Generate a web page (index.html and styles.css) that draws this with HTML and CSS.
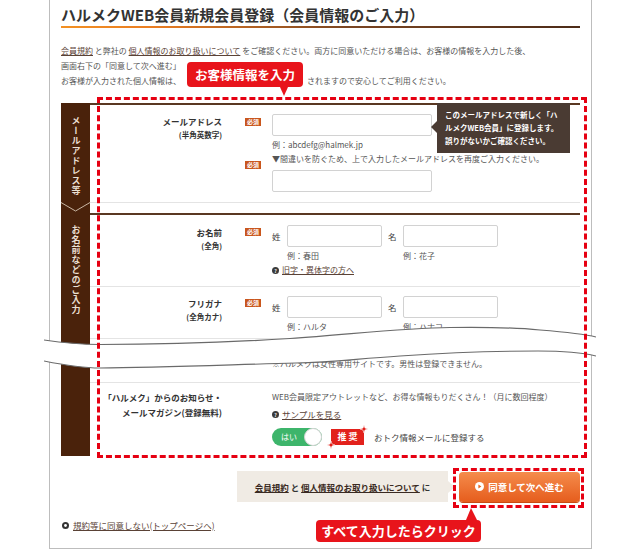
FILE: index.html
```html
<!DOCTYPE html>
<html lang="ja">
<head>
<meta charset="utf-8">
<title>ハルメクWEB会員新規会員登録</title>
<link rel="stylesheet" href="styles.css">
</head>
<body>
<div class="frame">
  <h1 class="title">ハルメクWEB会員新規会員登録（会員情報のご入力）</h1>
  <p class="intro">
    <a href="#">会員規約</a> と弊社の <a href="#">個人情報のお取り扱いについて</a> をご確認ください。両方に同意いただける場合は、お客様の情報を入力した後、<br>
    画面右下の「同意して次へ進む」<br>
    お客様が入力された個人情報は、<span class="gap"></span>されますので安心してご利用ください。
  </p>

  <div class="form">
    <section class="group group--email">
      <div class="side">
        <span class="side-text">メールアドレス等</span>
        <svg class="chevron" width="29" height="10" viewBox="0 0 29 10"><polyline points="0,0.5 14.5,9 29,0.5" fill="none" stroke="#c9b6a4" stroke-width="1"/></svg>
      </div>
      <div class="group-body">
        <div class="row row--email">
          <div class="label"><b>メールアドレス</b><small>(半角英数字)</small></div>
          <div class="fields">
            <div class="sub">
              <span class="req req--first">必須</span>
              <div class="field">
                <input class="input" type="text">
                <p class="hint hint--after">例：abcdefg@halmek.jp</p>
              </div>
            </div>
            <div class="sub">
              <span class="req req--note">必須</span>
              <div class="field">
                <p class="hint">▼間違いを防ぐため、上で入力したメールアドレスを再度ご入力ください。</p>
                <input class="input input--below" type="text">
              </div>
            </div>
          </div>
        </div>
      </div>
    </section>

    <section class="group">
      <div class="side side--name">
        <span class="side-text">お名前などのご入力</span>
      </div>
      <div class="group-body">
        <div class="row row--name">
          <div class="label"><b>お名前</b><small>(全角)</small></div>
          <div class="fields">
            <div class="sub">
              <span class="req">必須</span>
              <div class="field">
                <div class="name-pair">
                  <div class="name-part"><span class="name-label">姓</span><input class="input input--name" type="text"><span class="hint hint--after">例：春田</span></div>
                  <div class="name-part"><span class="name-label">名</span><input class="input input--name" type="text"><span class="hint hint--after">例：花子</span></div>
                </div>
                <p class="help"><span class="q">?</span><a href="#">旧字・異体字の方へ</a></p>
              </div>
            </div>
          </div>
        </div>

        <div class="row row--kana">
          <div class="label"><b>フリガナ</b><small>(全角カナ)</small></div>
          <div class="fields">
            <div class="sub">
              <span class="req">必須</span>
              <div class="field">
                <div class="name-pair">
                  <div class="name-part"><span class="name-label">姓</span><input class="input input--name" type="text"><span class="hint hint--after">例：ハルタ</span></div>
                  <div class="name-part"><span class="name-label">名</span><input class="input input--name" type="text"><span class="hint hint--after">例：ハナコ</span></div>
                </div>
              </div>
            </div>
          </div>
        </div>

        <div class="row row--notice">
          <div class="label"></div>
          <div class="fields plain">
            <p class="hint">※ハルメクは女性専用サイトです。男性は登録できません。</p>
          </div>
        </div>

        <div class="row row--news">
          <div class="label label--news"><b>「ハルメク」からのお知らせ・</b><b>メールマガジン(登録無料)</b></div>
          <div class="fields plain">
            <p class="news-text">WEB会員限定アウトレットなど、お得な情報もりだくさん！（月に数回程度）</p>
            <p class="help help--sample"><span class="q">?</span><a href="#">サンプルを見る</a></p>
            <div class="toggle">
              <span class="switch"><span class="switch-text">はい</span><span class="knob"></span></span>
              <span class="rec">推奨
                <svg class="spark spark--tr" width="8" height="8" viewBox="0 0 8 8"><path d="M4 0 L5 3 L8 4 L5 5 L4 8 L3 5 L0 4 L3 3 Z" fill="#e3211b" stroke="#fff" stroke-width="0.6"/></svg>
                <svg class="spark spark--bl" width="8" height="8" viewBox="0 0 8 8"><path d="M4 0 L5 3 L8 4 L5 5 L4 8 L3 5 L0 4 L3 3 Z" fill="#e3211b" stroke="#fff" stroke-width="0.6"/></svg>
              </span>
              <span class="toggle-text">おトク情報メールに登録する</span>
            </div>
          </div>
        </div>
      </div>
    </section>
  </div>

  <div class="actions">
    <div class="agree"><a href="#">会員規約</a>&nbsp;と&nbsp;<a href="#">個人情報のお取り扱いについて</a>&nbsp;に</div>
    <a class="btn" href="#"><svg class="btn-icon" width="9" height="9" viewBox="0 0 9 9"><circle cx="4.5" cy="4.5" r="4.5" fill="#fff"/><path d="M3.4 2.5 L6.4 4.5 L3.4 6.5 Z" fill="#e8661f"/></svg>同意して次へ進む</a>
  </div>

  <p class="back"><svg class="back-icon" width="7" height="7" viewBox="0 0 7 7"><circle cx="3.5" cy="3.5" r="3.5" fill="#333"/><circle cx="3.5" cy="3.5" r="1.4" fill="#fff"/></svg><a href="#">規約等に同意しない(トップページへ)</a></p>

  <!-- overlays -->
  <div class="tooltip">このメールアドレスで新しく「ハ<br>ルメクWEB会員」に登録します。<br>誤りがないかご確認ください。</div>

  <svg class="wave" width="552" height="50" viewBox="0 0 552 50">
    <path d="M0,18 C20,21 38,22.5 56,22.5 C120,22.5 190,20 246,16.5 C310,12 360,6 406,5.5 C440,5 470,5.5 496,8 C520,10 540,12 552,15 L552,34 C540,31 520,29 494,29 C450,29 400,31 356,34 C310,37 290,40 252,41 C180,43 110,46 56,46 C38,46 20,43 0,39 Z" fill="#fff"/>
    <path d="M0,18 C20,21 38,22.5 56,22.5 C120,22.5 190,20 246,16.5 C310,12 360,6 406,5.5 C440,5 470,5.5 496,8 C520,10 540,12 552,15" fill="none" stroke="#6a6a6a" stroke-width="1.2"/>
    <path d="M552,34 C540,31 520,29 494,29 C450,29 400,31 356,34 C310,37 290,40 252,41 C180,43 110,46 56,46 C38,46 20,43 0,39" fill="none" stroke="#6a6a6a" stroke-width="1.2"/>
  </svg>

  <div class="mark mark--form"></div>
  <div class="mark mark--btn"></div>
  <div class="callout callout--top">お客様情報を入力</div>
  <div class="callout callout--bottom">すべて入力したらクリック</div>
</div>
</body>
</html>
```

FILE: styles.css
```css
* { box-sizing: border-box; margin: 0; padding: 0; }

body {
  margin: 0;
  background: #fff;
  font-family: "Noto Sans CJK JP", "Noto Sans", sans-serif;
  color: #444;
}

a { color: #5a4236; text-decoration: underline; }

.frame {
  position: relative;
  margin-left: 49px;
  width: 543px;
  border: 1px solid #bdbdbd;
  border-top: 0;
  padding: 0 11px 16px;
}

.title {
  font-size: 15px;
  font-weight: bold;
  color: #333;
  line-height: 18px;
  padding: 6px 0 2px;
  border-bottom: 2px solid #6b3d1e;
  border-image: linear-gradient(90deg, #f39123 0%, #ea7d22 18%, #7a4522 55%, #4c2b18 100%) 1;
}

.intro {
  margin-top: 15px;
  font-size: 8px;
  line-height: 15px;
  color: #555;
  white-space: nowrap;
}
.gap { display: inline-block; width: 126px; }

/* form */
.form { margin-top: 15px; }

.group { display: flex; }

.side {
  width: 29px;
  flex-shrink: 0;
  background: #4a220b;
  display: flex;
  flex-direction: column;
  align-items: center;
  padding-top: 13px;
}

.side--name { padding-top: 12px; }

.side-text {
  writing-mode: vertical-rl;
  text-orientation: upright;
  color: #eadfd2;
  font-size: 9px;
  font-weight: bold;
  letter-spacing: 1px;
  line-height: 12px;
}

.chevron { margin-top: auto; margin-bottom: 1px; display: block; }

.group-body {
  flex: 1;
  border-top: 2px solid #5a3822;
}

.group--email .group-body { padding-bottom: 10px; }

.row {
  display: grid;
  grid-template-columns: 132px 1fr;
  column-gap: 23px;
  border-bottom: 1px solid #e4e4e4;
}

.row--email { padding: 9px 0 10px; }
.row--name { padding: 10px 0 9px; }
.row--kana { padding: 9px 0 4px; }
.row--notice { padding: 18px 0 11px; }
.row--news { padding: 7px 0 10px; border-bottom: 0; }

.label { text-align: right; color: #333; }
.label b { display: block; font-size: 8.5px; line-height: 14px; font-weight: bold; }
.label small { display: block; font-size: 7.5px; line-height: 13px; font-weight: bold; }
.label--news b { line-height: 15px; }

.sub { display: flex; column-gap: 11px; }

.req {
  flex-shrink: 0;
  width: 16px;
  height: 8px;
  margin-top: 3px;
  background: #c9561d;
  color: #fff;
  font-size: 6px;
  line-height: 8px;
  text-align: center;
  font-weight: bold;
}
.req--first { margin-top: 4px; }
.req--note { margin-top: 9px; }

.input {
  display: block;
  width: 160px;
  height: 22px;
  border: 1px solid #d2d2d2;
  border-radius: 2px;
  background: #fff;
}
.input--below { margin-top: 4px; }
.input--name { width: 95px; }

.hint {
  display: block;
  font-size: 8px;
  line-height: 14px;
  color: #555;
  white-space: nowrap;
}
.hint--after { margin-top: 2px; }

.name-pair { display: flex; column-gap: 6px; }
.name-part { display: grid; grid-template-columns: 15px 95px; }
.name-label { font-size: 8.5px; line-height: 22px; color: #444; }
.name-part .hint { grid-column: 2; }

.help {
  display: flex;
  align-items: center;
  column-gap: 3px;
  font-size: 8px;
  line-height: 14px;
  color: #555;
}
.help a { color: #5a4236; }
.help--sample { margin-top: 3px; font-size: 8.5px; }

.q {
  width: 7px;
  height: 7px;
  border-radius: 50%;
  background: #3a3a3a;
  color: #fff;
  font-size: 5px;
  line-height: 7px;
  text-align: center;
  font-weight: bold;
  flex-shrink: 0;
}

.plain { padding-left: 27px; }

.news-text { font-size: 8px; line-height: 14px; color: #555; white-space: nowrap; }

.toggle { display: flex; align-items: center; margin-top: 7px; }

.switch {
  width: 50px;
  height: 18px;
  border-radius: 9px;
  background: #3db56b;
  display: flex;
  align-items: center;
  justify-content: space-between;
  padding-left: 9px;
}
.switch-text { color: #fff; font-size: 8px; line-height: 18px; }
.knob {
  width: 18px;
  height: 18px;
  border-radius: 50%;
  background: #fff;
  border: 1px solid #d4d4d4;
}

.rec {
  position: relative;
  margin-left: 9px;
  width: 33px;
  height: 16px;
  background: #e2211c;
  color: #fff;
  font-size: 9px;
  font-weight: bold;
  line-height: 16px;
  letter-spacing: 2px;
  text-indent: 2px;
  text-align: center;
}
.spark { position: absolute; }
.spark--tr { right: -4px; top: -4px; }
.spark--bl { left: -4px; bottom: -4px; }

.toggle-text { margin-left: 10px; font-size: 8.5px; color: #444; }

/* actions */
.actions {
  display: flex;
  justify-content: flex-end;
  align-items: center;
  margin-top: 15px;
}

.agree {
  position: relative;
  width: 211px;
  height: 31px;
  margin-right: 11px;
  background: #f0ebe4;
  display: flex;
  align-items: center;
  justify-content: center;
  font-size: 8.5px;
  font-weight: bold;
  color: #333;
}
.agree a { color: #3a2a22; }
.agree::after {
  content: "";
  position: absolute;
  right: -7px;
  top: 50%;
  margin-top: -6px;
  border-left: 7px solid #f0ebe4;
  border-top: 6px solid transparent;
  border-bottom: 6px solid transparent;
}

.btn {
  width: 121px;
  height: 30px;
  border-radius: 4px;
  background: linear-gradient(#f58c4c, #e65d1d);
  box-shadow: 0 1px 0 #c84b12;
  color: #fff;
  text-decoration: none;
  font-size: 9.5px;
  font-weight: bold;
  display: flex;
  align-items: center;
  justify-content: center;
  column-gap: 4px;
}

.back {
  margin-top: 16px;
  margin-left: 1px;
  display: flex;
  align-items: center;
  column-gap: 4px;
  font-size: 8.5px;
  line-height: 14px;
}
.back a { color: #5a4236; }

/* overlays */
.tooltip {
  position: absolute;
  left: 387px;
  top: 103px;
  width: 133px;
  height: 50px;
  background: #4a3b33;
  color: #fff;
  font-size: 7.5px;
  font-weight: bold;
  line-height: 13px;
  padding: 5px 0 0 8px;
  white-space: nowrap;
}
.tooltip::before {
  content: "";
  position: absolute;
  left: -6px;
  top: 18px;
  border-right: 6px solid #4a3b33;
  border-top: 6px solid transparent;
  border-bottom: 6px solid transparent;
}

.wave { position: absolute; left: -6px; top: 322px; }

.mark {
  position: absolute;
  border: 3px dashed #e60012;
}
.mark--form { left: 47px; top: 97px; width: 490px; height: 361px; }
.mark--btn { left: 403px; top: 468px; width: 131px; height: 40px; }

.callout {
  position: absolute;
  background: #e8141b;
  color: #fff;
  font-weight: bold;
  border-radius: 4px;
  text-align: center;
  white-space: nowrap;
}
.callout--top {
  left: 137px;
  top: 62px;
  width: 116px;
  height: 25px;
  font-size: 12.5px;
  line-height: 25px;
}
.callout--top::after {
  content: "";
  position: absolute;
  left: 93px;
  bottom: -9px;
  border-top: 9px solid #e8141b;
  border-left: 4px solid transparent;
  border-right: 4px solid transparent;
}
.callout--bottom {
  left: 266px;
  top: 520px;
  width: 165px;
  height: 22px;
  font-size: 13px;
  line-height: 22px;
}
.callout--bottom::after {
  content: "";
  position: absolute;
  left: 150px;
  top: -12px;
  border-bottom: 12px solid #e8141b;
  border-left: 5px solid transparent;
  border-right: 6px solid transparent;
}
```
